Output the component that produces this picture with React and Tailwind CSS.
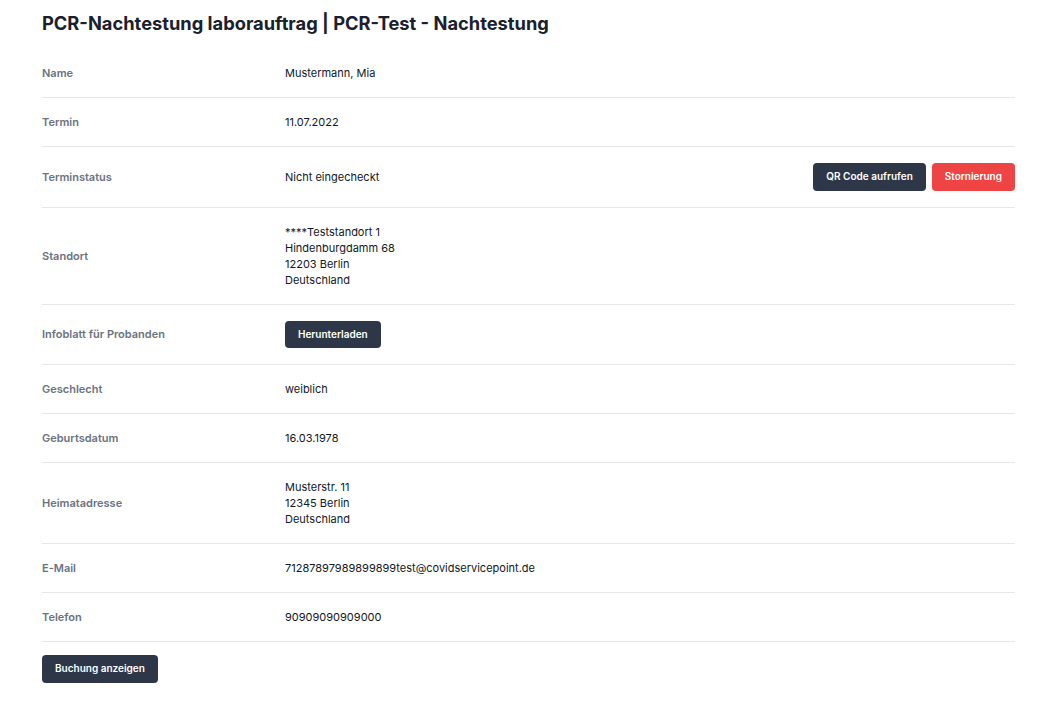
import React from "react";

const font = { fontFamily: "Inter, 'Noto Sans', sans-serif" };

function Btn({ children, red }) {
  return (
    <button
      className={
        (red ? "bg-[#ef4444]" : "bg-[#2d3748]") +
        " block h-[27.5px] px-[13px] rounded-[4px] text-white text-[10px] font-semibold leading-[27.5px] whitespace-nowrap"
      }
    >
      {children}
    </button>
  );
}

function Row({ label, children, right }) {
  return (
    <div className="flex items-center py-4 border-b border-[#e5e7eb]">
      <div className="w-[243px] shrink-0 text-[11px] leading-4 font-semibold text-[#6b7280]">{label}</div>
      <div className="flex-1 text-[11px] leading-4 text-[#111827]">{children}</div>
      {right && <div className="flex gap-[6px]">{right}</div>}
    </div>
  );
}

export default function App() {
  return (
    <div className="min-h-[716px] bg-white pl-[42px] pr-[25px] pt-[11px]" style={font}>
      <h1 className="text-[18.3px] leading-[24px] font-bold text-[#1a202c] mb-[14px]">
        PCR-Nachtestung laborauftrag | PCR-Test - Nachtestung
      </h1>
      <Row label="Name">Mustermann, Mia</Row>
      <Row label="Termin">11.07.2022</Row>
      <Row
        label="Terminstatus"
        right={
          <>
            <Btn>QR Code aufrufen</Btn>
            <Btn red>Stornierung</Btn>
          </>
        }
      >
        Nicht eingecheckt
      </Row>
      <Row label="Standort">
        <div>****Teststandort 1</div>
        <div>Hindenburgdamm 68</div>
        <div>12203 Berlin</div>
        <div>Deutschland</div>
      </Row>
      <Row label="Infoblatt für Probanden">
        <div className="flex">
          <Btn>Herunterladen</Btn>
        </div>
      </Row>
      <Row label="Geschlecht">weiblich</Row>
      <Row label="Geburtsdatum">16.03.1978</Row>
      <Row label="Heimatadresse">
        <div>Musterstr. 11</div>
        <div>12345 Berlin</div>
        <div>Deutschland</div>
      </Row>
      <Row label="E-Mail">71287897989899899test@covidservicepoint.de</Row>
      <Row label="Telefon">90909090909000</Row>
      <div className="pt-[13px] flex">
        <Btn>Buchung anzeigen</Btn>
      </div>
    </div>
  );
}
